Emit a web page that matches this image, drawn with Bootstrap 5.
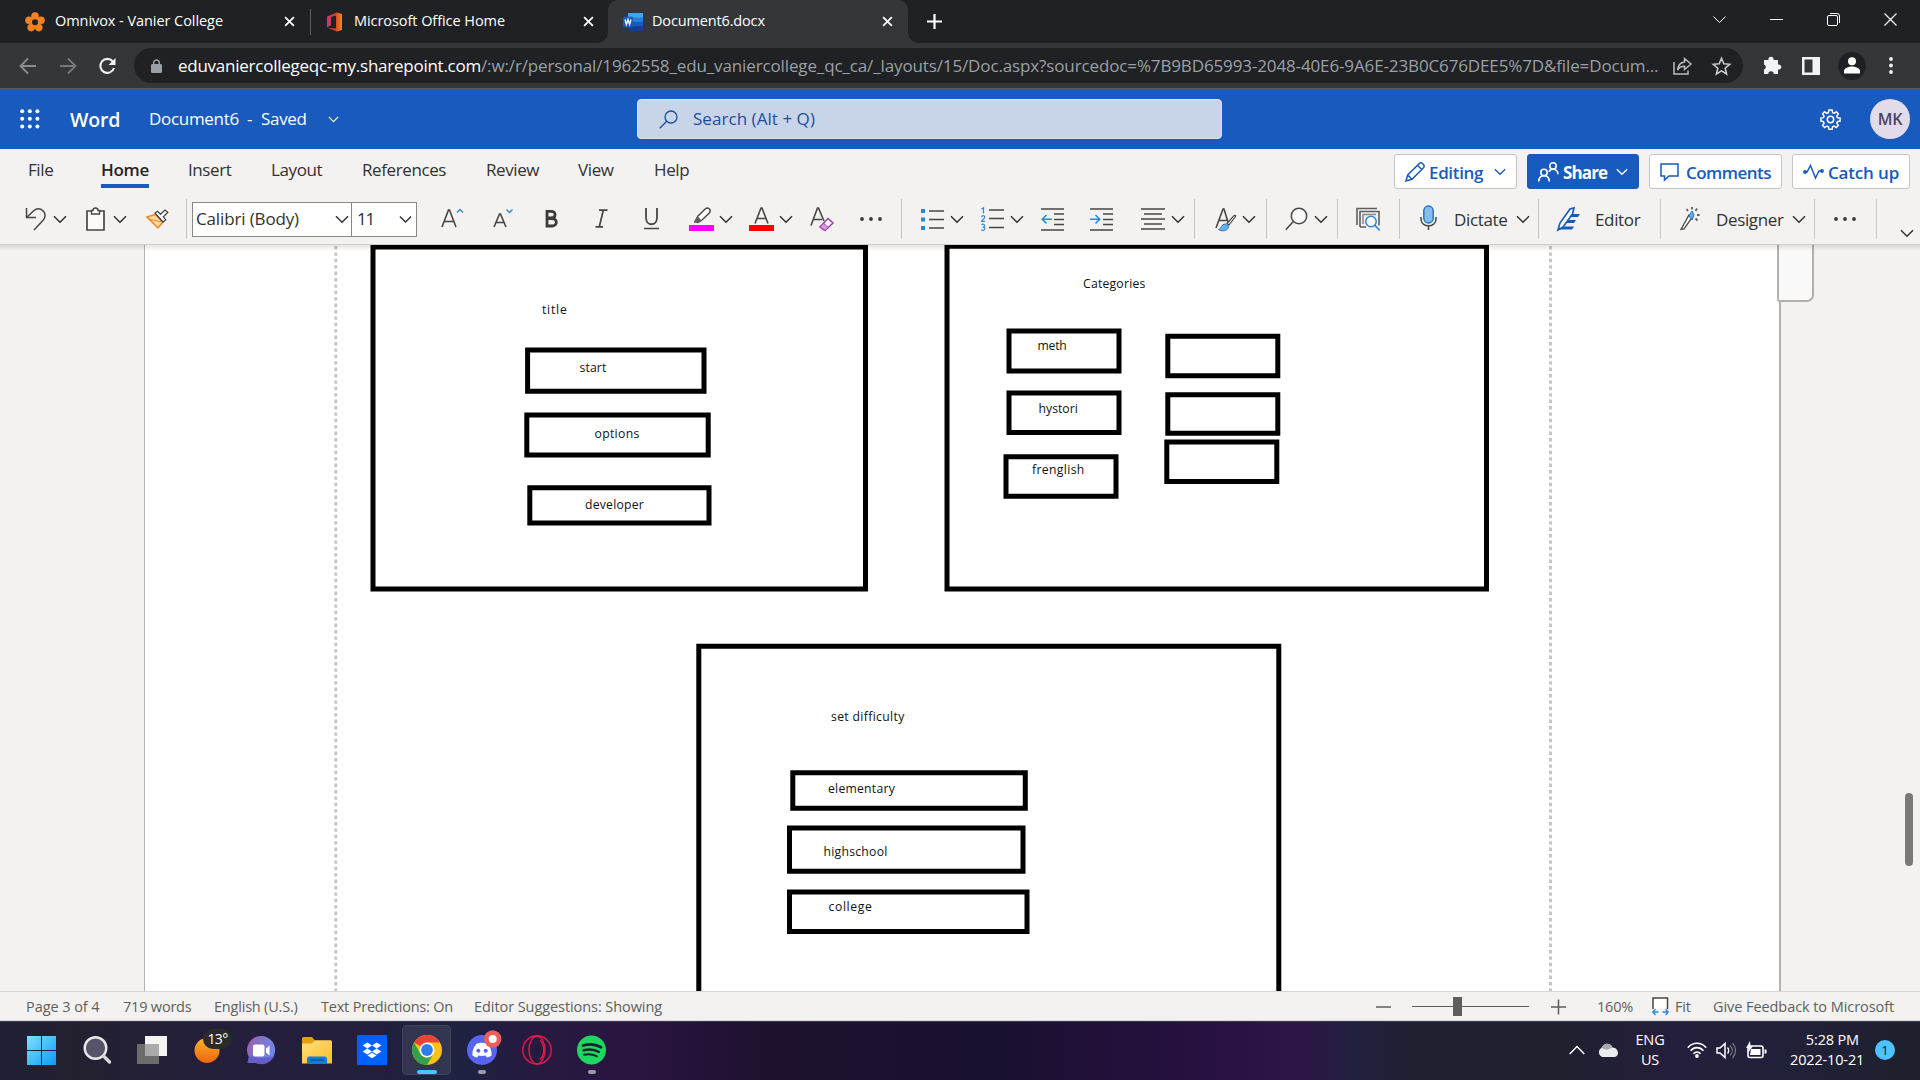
<!DOCTYPE html>
<html lang="en">
<head>
<meta charset="utf-8">
<title>Document6.docx</title>
<link rel="stylesheet" href="https://cdn.jsdelivr.net/npm/bootstrap@5.3.0/dist/css/bootstrap.min.css">
<style>
body{width:1920px;height:1080px;overflow:hidden;font-family:"Open Sans","Noto Sans",sans-serif;font-size:17px;letter-spacing:-.3px;line-height:1.3;color:#323130;background:#f3f2f1}
svg{display:block;flex:none;overflow:visible}
.cells{display:grid;align-items:center;justify-items:start;white-space:nowrap}
.cells>*{min-width:0}
/* browser */
.tabstrip{height:43px;background:#202124;color:#fff;font-size:14.5px;letter-spacing:-.06px;grid-template-columns:30px 229px 26px 16px 28px 229px 25px 319px 786px 57px 57px 57px 20px;padding-left:25px}
.tab-now{height:43px;width:300px;background:#35363a;border-radius:10px 10px 0 0;padding:0 15px 0 15px;position:relative}
.tab-now::before,.tab-now::after{content:"";position:absolute;bottom:0;width:10px;height:10px}
.tab-now::before{left:-10px;background:radial-gradient(circle at 0 0,transparent 9.5px,#35363a 10px)}
.tab-now::after{right:-10px;background:radial-gradient(circle at 100% 0,transparent 9.5px,#35363a 10px)}
.tab-now span{margin-left:9px;letter-spacing:-.15px}
.vr1{width:1px;height:26px;background:#5b5c60}
.addr{height:46px;background:#35363a;border-bottom:1px solid #5c5d60;grid-template-columns:40px 39px 36px 1628px 40px 36px 51px 10px;padding-left:19px}
.omni{height:35px;width:1609px;border-radius:18px;background:#202124;color:#9aa0a6;padding:0 12px 0 17px;letter-spacing:-.128px}
.omni b{font-weight:400;color:#fff;letter-spacing:-.25px}
.omni .url{padding-top:2px}
.star{margin-left:20px}
.prof{width:28px;height:28px;border-radius:50%;background:#202124}
/* word header */
.wordbar{height:60px;background:#185abd;color:#fff;grid-template-columns:50px 79px 98px 14px 67px 309px 1183px 50px 40px;padding-left:20px}
.wordbar .nm{font-size:19.5px;font-weight:600;letter-spacing:-.2px;padding-top:2px}
.find{width:585px;height:40px;background:#c8d4e8;border:1px solid #d9e2f1;border-radius:4px;color:#1e4e9c;padding-left:21px;gap:15px;letter-spacing:.05px}
.ava{width:40px;height:40px;border-radius:50%;background:#e2dcea;color:#4a4560;font-weight:600;font-size:16px}
.menus{height:45px;grid-template-columns:73px 87px 83px 91px 124px 92px 76px 740px 133px 122px 143px 118px;padding-left:28px;letter-spacing:-.4px}
.menus .cur{font-weight:600;letter-spacing:-.3px;position:relative;color:#252423}
.menus .cur::after{content:"";position:absolute;left:0;right:0;bottom:-6px;height:4px;background:#185abd}
.menus>span{margin-top:-2px}
.pill{height:35px;background:#fff;border:1px solid #c8c6c4;border-radius:3px;color:#185abd;font-weight:600;letter-spacing:-.35px;padding:0 10px}
.pill span{padding-top:3px}
.pill.fillb{background:#185abd;border-color:#185abd;color:#fff;font-weight:700;letter-spacing:-.85px}
.p-edit{width:123px}.p-share{width:112px}.p-comm{width:133px;letter-spacing:-.52px}.p-catch{width:118px;letter-spacing:-.17px}
.p-comm span{margin-left:7px}
.ribbon{height:50px;padding-left:25px;grid-template-columns:28px 33px 27px 33px 40px 6px 249px 52px 52px 50px 49px 45px 30px 30px 30px 31px 50px 41px 20px 29px 31px 29px 31px 49px 51px 30px 23px 21px 27px 24px 19px 29px 23px 19px 43px 21px 34px 62px 22px 19px 38px 65px 20px 36px 76px 22px 20px 42px 24px 15px;letter-spacing:-.35px}
.ribbon>span:not(.sep){padding-top:2px}
.sep{width:1px;height:40px;background:#c8c6c4}
.combo{width:225px;height:35px;background:#fff;border:1px solid #8a8886}
.combo .fam{width:159px;border-right:1px solid #8a8886;padding:1px 2px 0 3px;letter-spacing:-.14px}
.combo .siz{padding:1px 4px 0 5px;letter-spacing:-1.2px}
.low{align-self:end;margin-bottom:6px}
/* document area */
.stage{height:747px;background:#f3f2f1;overflow:hidden;position:relative}
.stage::before{content:"";position:absolute;z-index:2;left:0;right:0;top:0;height:7px;border-top:1px solid #cfcdcb;background:linear-gradient(rgba(0,0,0,.1),rgba(0,0,0,0))}
.gutter{width:144px}
.sheet{width:1637px;background:#fff;border:solid #b4b2b0;border-width:0 2px 0 1px}
.flap{position:absolute;left:1777px;top:0;width:37px;height:58px;background:#f9f9f9;border:2px solid #b1b0ae;border-top:0;border-radius:0 0 7px 3px}
.thumb{position:absolute;left:1905px;top:549px;width:8px;height:73px;border-radius:4px;background:#7a7977}
.sheet text{font-size:12.2px;fill:#111}
/* status bar */
.status{height:30px;background:#f3f2f1;border-top:1px solid #d8d6d4;border-bottom:1px solid #d8d6d4;color:#605e5c;font-size:14.5px;letter-spacing:-.2px;padding-left:26px;grid-template-columns:97px 91px 107px 153px 902px 36px 139px 46px 55px 23px 38px 182px}
.status>span{padding-top:3px}
.status .s1{letter-spacing:-.07px}
/* taskbar */
.task{height:59px;color:#fff;font-size:14.5px;letter-spacing:-.15px;line-height:20px;border-top:1px solid #3c3b52;padding-bottom:2px;background:linear-gradient(90deg,#1f2036 0,#232030 80px,#231f3b 200px,#221e3d 380px,#1d2340 450px,#251b40 520px,#2a1440 640px,#1e1130 760px,#1a1030 1000px,#271140 1200px,#2e1547 1300px,#20203e 1360px,#1f2130 1420px,#20202f 1560px,#241f3c 1680px,#21203a 1780px,#1e202c 1920px);padding-left:27px;grid-template-columns:56px 54px 57px 53px 55px 55px 45px 65px 55px 55px 992px 28px 38px 52px 29px 30px 40px 89px 22px}
.hot{width:49px;height:50px;border-radius:5px;background:rgba(255,255,255,.09);border:1px solid rgba(255,255,255,.08)}
.mini{position:relative}
.mini .on{position:absolute;top:35px;left:50%;transform:translateX(-50%);width:8px;height:4px;border-radius:2px;background:#9c9aa8}
.hot .on{width:20px;background:#4cc2ff;top:auto;bottom:0}
.deg{position:absolute;left:9px;top:-8px;width:29px;height:20px;border-radius:10px;background:#2b2b2b;font-size:14px;line-height:19px;text-align:center;letter-spacing:-.6px}
.lang{width:30px}
.clock{width:73px}
.ding{width:20px;height:20px;border-radius:50%;background:#4cc2ff;color:#14202b;font-size:13px}
</style>
<script src="https://cdn.jsdelivr.net/npm/bootstrap@5.3.0/dist/js/bootstrap.bundle.min.js"></script>
</head>
<body class="d-flex flex-column">
<svg width="0" height="0" class="position-absolute">
  <symbol id="cv" viewBox="0 0 14 9"><path d="M1 1.2l6 6 6-6" fill="none" stroke="currentColor" stroke-width="1.5"/></symbol>
  <symbol id="xx" viewBox="0 0 12 12"><path d="M1.2 1.2l9.6 9.6M10.8 1.2l-9.6 9.6" stroke="#fff" stroke-width="1.9"/></symbol>
  <symbol id="dots" viewBox="0 0 22 4"><g fill="#3b3a39"><circle cx="2" cy="2" r="1.9"/><circle cx="11" cy="2" r="1.9"/><circle cx="20" cy="2" r="1.9"/></g></symbol>
  <linearGradient id="gw" x1="0" y1="0" x2="1" y2="1"><stop offset="0" stop-color="#7fe0ff"/><stop offset="1" stop-color="#0a9bf5"/></linearGradient>
  <linearGradient id="gm" x1="0" y1="0" x2="0" y2="1"><stop offset="0" stop-color="#f7b52c"/><stop offset="1" stop-color="#f0620e"/></linearGradient>
  <linearGradient id="gc" x1="0" y1="0" x2="1" y2=".3"><stop offset="0" stop-color="#9a5fa8"/><stop offset="1" stop-color="#6f86e6"/></linearGradient>
  <linearGradient id="gf" x1="0" y1="0" x2="1" y2="1"><stop offset="0" stop-color="#ffe07a"/><stop offset="1" stop-color="#fdbd2b"/></linearGradient>
  <linearGradient id="go" x1="0" y1="0" x2="1" y2="0"><stop offset="0" stop-color="#c23a7a"/><stop offset=".55" stop-color="#e0401c"/><stop offset="1" stop-color="#f08a1a"/></linearGradient>
</svg>

<!-- tab strip -->
<div class="tabstrip cells">
  <svg width="20" height="20" viewBox="0 0 20 20"><g fill="#f58220"><circle cx="10" cy="4" r="3.8"/><circle cx="16" cy="8.3" r="3.8"/><circle cx="13.8" cy="15.6" r="3.8"/><circle cx="6.2" cy="15.6" r="3.8"/><circle cx="4" cy="8.3" r="3.8"/><circle cx="10" cy="10.5" r="5"/></g><circle cx="10" cy="10.3" r="3" fill="#202124"/></svg>
  <span>Omnivox - Vanier College</span>
  <svg width="11" height="11"><use href="#xx"/></svg>
  <span class="vr1"></span>
  <svg width="17" height="20" viewBox="0 0 17 20"><path d="M1 4.500L11 .5 16 2v16l-5 1.500-9-3.500 8 .6V3.600L5 5v8.300l-4 2z" fill="url(#go)"/></svg>
  <span>Microsoft Office Home</span>
  <svg width="11" height="11"><use href="#xx"/></svg>
  <div class="tab-now d-flex align-items-center">
    <svg width="20" height="18" viewBox="0 0 20 18"><path d="M5 0h15v5H5z" fill="#41a5ee"/><path d="M5 4.500h15V9H5z" fill="#2b7cd3"/><path d="M5 9h15v4.500H5z" fill="#185abd"/><path d="M5 13.500h15V18H5z" fill="#103f91"/><rect y="3.800" width="10" height="10.400" rx="1" fill="#185abd"/><path d="M2 6.500l1.400 5 1.600-5 1.600 5 1.400-5" fill="none" stroke="#fff" stroke-width="1.300"/></svg>
    <span class="me-auto">Document6.docx</span>
    <svg width="11" height="11"><use href="#xx"/></svg>
  </div>
  <svg width="15" height="15" viewBox="0 0 15 15"><path d="M7.500 0v15M0 7.500h15" stroke="#fff" stroke-width="2.200"/></svg>
  <svg class="mb-1" width="13" height="8" viewBox="0 0 13 8"><path d="M.5.5l6 6 6-6" fill="none" stroke="#fff"/></svg>
  <svg class="mb-1" width="13" height="13" viewBox="0 0 13 13"><path d="M0 6.500h13" stroke="#fff"/></svg>
  <svg class="mb-1" width="13" height="13" viewBox="0 0 13 13"><rect x=".5" y="2.500" width="10" height="10" rx="1.500" fill="none" stroke="#fff"/><path d="M3 .5h7a2.500 2.500 0 0 1 2.500 2.500v7" fill="none" stroke="#fff"/></svg>
  <svg class="mb-1" width="13" height="13" viewBox="0 0 13 13"><path d="M.5.5l12 12M12.500 .5l-12 12" stroke="#fff" stroke-width="1.100"/></svg>
</div>

<!-- address bar -->
<div class="addr cells">
  <svg width="18" height="18" viewBox="0 0 18 18"><path d="M17 9H2M9 1.500L1.500 9 9 16.500" fill="none" stroke="#8b8d91" stroke-width="1.800"/></svg>
  <svg width="18" height="18" viewBox="0 0 18 18"><path d="M1 9h15M9 1.500L16.500 9 9 16.500" fill="none" stroke="#77797d" stroke-width="1.800"/></svg>
  <svg width="18" height="18" viewBox="0 0 18 18"><path d="M14.800 4.500A7 7 0 1 0 16 11" fill="none" stroke="#f1f1f1" stroke-width="2.100"/><path d="M17.500 1v7h-7z" fill="#f1f1f1"/></svg>
  <div class="omni d-flex align-items-center">
    <svg width="11" height="14" viewBox="0 0 11 14"><rect y="5" width="11" height="9" rx="1.300" fill="#9aa0a6"/><path d="M2.700 5.500V3.700a2.800 2.800 0 0 1 5.600 0v1.800" fill="none" stroke="#9aa0a6" stroke-width="1.500"/></svg>
    <span class="url text-nowrap ps-3 me-auto"><b>eduvaniercollegeqc-my.sharepoint.com</b>/:w:/r/personal/1962558_edu_vaniercollege_qc_ca/_layouts/15/Doc.aspx?sourcedoc=%7B9BD65993-2048-40E6-9A6E-23B0C676DEE5%7D&amp;file=Docum...</span>
    <svg width="19" height="18" viewBox="0 0 19 18"><g fill="none" stroke="#b9bcc0" stroke-width="1.500"><path d="M1 5v12h14v-3.500"/><path d="M11.500 1.500L18 7l-6.500 5.500V9.300C8 9.200 6 10.500 4.500 13 5 8.500 7.500 5.500 11.500 5z"/></g></svg>
    <svg class="star" width="19" height="18" viewBox="0 0 19 18"><path d="M9.500 1.300l2.300 5.500 5.900.5-4.500 3.900 1.400 5.800-5.100-3.100L4.400 17l1.400-5.800L1.300 7.300l5.900-.5z" fill="none" stroke="#c9ccd0" stroke-width="1.600"/></svg>
  </div>
  <svg width="20" height="19" viewBox="0 0 20 19"><path d="M2 4h4.500a2.600 2.600 0 1 1 5 0H16v4.500a2.600 2.600 0 1 1 0 5V18h-4.300a2.700 2.700 0 0 0-5.400 0H2v-4.500a2.600 2.600 0 0 0 0-5z" fill="#f1f3f4"/></svg>
  <svg width="18" height="18" viewBox="0 0 18 18"><path d="M0 0h18v18H0z" fill="#f1f3f4"/><path d="M2.500 2.500h8v13h-8z" fill="#35363a"/></svg>
  <div class="prof d-flex align-items-center justify-content-center"><svg width="16" height="17" viewBox="0 0 16 17"><circle cx="8" cy="4.300" r="4" fill="#fff"/><path d="M0 16.500v-2.500c0-3 5-4.500 8-4.500s8 1.500 8 4.500v2.500z" fill="#fff"/></svg></div>
  <svg width="4" height="16" viewBox="0 0 4 16"><g fill="#f1f3f4"><circle cx="2" cy="1" r="1.900"/><circle cx="2" cy="7.500" r="1.900"/><circle cx="2" cy="14" r="1.900"/></g></svg>
</div>

<!-- Word title bar -->
<div class="wordbar cells">
  <svg width="20" height="20" viewBox="0 0 20 20"><g fill="#fff"><circle cx="2.200" cy="2.200" r="2"/><circle cx="9.800" cy="2.200" r="2"/><circle cx="17.400" cy="2.200" r="2"/><circle cx="2.200" cy="9.800" r="2"/><circle cx="9.800" cy="9.800" r="2"/><circle cx="17.400" cy="9.800" r="2"/><circle cx="2.200" cy="17.400" r="2"/><circle cx="9.800" cy="17.400" r="2"/><circle cx="17.400" cy="17.400" r="2"/></g></svg>
  <span class="nm">Word</span><span>Document6</span><span>-</span><span>Saved</span>
  <svg width="11" height="7"><use href="#cv"/></svg>
  <div class="find d-flex align-items-center"><svg width="19" height="19" viewBox="0 0 19 19"><circle cx="12" cy="7" r="6" fill="none" stroke="#1e4e9c" stroke-width="1.300"/><path d="M7.700 11.300L.7 18.300" stroke="#1e4e9c" stroke-width="1.300"/></svg><span>Search (Alt + Q)</span></div>
  <svg width="21" height="21" viewBox="0 0 21 21"><circle cx="10.500" cy="10.500" r="3.200" fill="none" stroke="#fff" stroke-width="1.500"/><path d="M8.900 1h3.200l.5 2.600 1.500.7L16.300 2.800l2 2-1.500 2.200.7 1.700 2.600.4v3l-2.600.5-.7 1.600 1.500 2.200-2.100 2.100-2.100-1.500-1.500.7-.5 2.500H8.900l-.5-2.500-1.600-.7-2.200 1.500-2-2.100 1.500-2.100-.7-1.700L.9 12.100v-3l2.500-.4.700-1.700-1.500-2.200 2-2 2.200 1.500 1.600-.7z" fill="none" stroke="#fff" stroke-width="1.500"/></svg>
  <div class="ava d-flex align-items-center justify-content-center">MK</div>
</div>

<!-- ribbon tabs -->
<div class="menus cells">
  <span>File</span><span class="cur">Home</span><span>Insert</span><span>Layout</span><span>References</span><span>Review</span><span>View</span><span>Help</span>
  <div class="pill p-edit d-flex align-items-center">
    <svg width="20" height="20" viewBox="0 0 20 20"><path d="M1 19l1.700-6L14.300 1.500a2.200 2.200 0 0 1 3.200 0l1 1a2.200 2.200 0 0 1 0 3.200L7 17.300zM2.700 13L7 17.300M12.500 3.300l4.200 4.200" fill="none" stroke="currentColor" stroke-width="1.500"/></svg><span class="ms-1 me-auto">Editing</span><svg width="12" height="8"><use href="#cv"/></svg></div>
  <div class="pill fillb p-share d-flex align-items-center">
    <svg width="21" height="20" viewBox="0 0 21 20"><g fill="none" stroke="currentColor" stroke-width="1.600"><circle cx="6" cy="10.500" r="3.200"/><path d="M.8 19.500c0-3.500 2-5.700 5.200-5.700s5.200 2.200 5.200 5.700"/><circle cx="15" cy="4" r="3.200"/><path d="M11 10c.5-1.800 2-2.800 4-2.800 3 0 4.800 2 5 5"/></g></svg><span class="ms-1 me-auto">Share</span><svg width="12" height="8"><use href="#cv"/></svg></div>
  <div class="pill p-comm d-flex align-items-center">
    <svg width="19" height="18" viewBox="0 0 19 18"><path d="M1 1h17v12H9l-4.500 4V13H1z" fill="none" stroke="currentColor" stroke-width="1.500"/></svg><span>Comments</span></div>
  <div class="pill p-catch d-flex align-items-center">
    <svg width="21" height="16" viewBox="0 0 21 16"><path d="M2 8h2l3.500-6.500 5 12.500 3.500-7h3" fill="none" stroke="currentColor" stroke-width="1.500"/><circle cx="2" cy="8" r="1.900" fill="currentColor"/><circle cx="19" cy="7" r="1.900" fill="currentColor"/></svg><span class="ms-1">Catch up</span></div>
</div>

<!-- ribbon commands -->
<div class="ribbon cells">
  <svg width="22" height="24" viewBox="0 0 22 24"><path d="M1.500 1v9.500H11M1.800 10.300L9 3.500C14 -.8 22 4 19.500 11c-.6 1.500-1.500 2.500-2.800 3.700L9 23" fill="none" stroke="#484644" stroke-width="1.500"/></svg>
  <svg width="14" height="9"><use href="#cv"/></svg>
  <svg width="19" height="24" viewBox="0 0 19 24"><path d="M1 4h17v19H1z" fill="#fafafa" stroke="#484644" stroke-width="1.700"/><path d="M5.500 7V3.500H7a2.500 2.500 0 0 1 5 0h1.500V7z" fill="#fff" stroke="#484644" stroke-width="1.400"/></svg>
  <svg width="14" height="9"><use href="#cv"/></svg>
  <svg width="23" height="20" viewBox="0 0 23 20"><path d="M1 8l8-2.500 8 7.500-5 6z" fill="#fcd9a0" stroke="#e8882d" stroke-width="1.500"/><path d="M3 10l13 3" stroke="#e8882d"/><path d="M9 4l2.500-1.700 3 3L19 1l2.800 2.300-4.400 4.600 2.300 3L17 13z" fill="#fff" stroke="#484644" stroke-width="1.300"/></svg>
  <span class="sep"></span>
  <div class="combo d-flex"><div class="fam d-flex align-items-center justify-content-between">Calibri (Body)<svg width="14" height="9"><use href="#cv"/></svg></div><div class="siz flex-fill d-flex align-items-center justify-content-between">11<svg width="13" height="9"><use href="#cv"/></svg></div></div>
  <svg width="22" height="22" viewBox="0 0 22 22"><path d="M1 19L7.500 2h1L15 19M3.300 13.500h9.500" fill="none" stroke="#484644" stroke-width="1.600"/><path d="M16 4.500l3-3 3 3" fill="none" stroke="#2b88d8" stroke-width="1.400"/></svg>
  <svg width="20" height="22" viewBox="0 0 20 22"><path d="M1 19L6.500 6h1L13 19M3 14.500h8" fill="none" stroke="#484644" stroke-width="1.600"/><path d="M13.500 1.500l3 3 3-3" fill="none" stroke="#2b88d8" stroke-width="1.400"/></svg>
  <svg width="13" height="20" viewBox="0 0 13 20"><path d="M2 2.300h4c5.500 0 5.300 6.700 0 6.700H2zM2 9.500h5c6 0 5.500 7.500 0 7.500H2z" fill="none" stroke="#3b3a39" stroke-width="2.800"/></svg>
  <svg width="13" height="20" viewBox="0 0 13 20"><path d="M4 1.200h8.500M.5 17.800H8M8.300 1.200L4.300 17.800" fill="none" stroke="#484644" stroke-width="1.700"/></svg>
  <svg width="15" height="22" viewBox="0 0 15 22"><path d="M2 0v9.500c0 9 11 9 11 0V0" fill="none" stroke="#484644" stroke-width="1.800"/><path d="M0 20.500h15" stroke="#484644" stroke-width="1.500"/></svg>
  <svg width="25" height="24" viewBox="0 0 25 24"><path d="M6 14.500L9 9l7.500-7.300c2-2 6.300 1 4 4L13 13l-4 2.500z" fill="#fff" stroke="#484644" stroke-width="1.400"/><path d="M5 16l3.500-7 4.500 5z" fill="#605e5c"/><path d="M0 18h25v6H0z" fill="#f0f"/></svg>
  <svg width="14" height="9"><use href="#cv"/></svg>
  <svg width="25" height="24" viewBox="0 0 25 24"><path d="M6 16.500L12 1h1l6 15.500M8.300 11.500h8.500" fill="none" stroke="#484644" stroke-width="1.600"/><path d="M0 18h25v6H0z" fill="#f00"/></svg>
  <svg width="14" height="9"><use href="#cv"/></svg>
  <svg width="24" height="24" viewBox="0 0 24 24"><path d="M1 18.500L7.500 1h1L14 14M3 12.500h9" fill="none" stroke="#484644" stroke-width="1.600"/><path d="M10 20l8-8.500 5 4.500-8 7.500z" fill="#fff" stroke="#a33bb0" stroke-width="1.500"/><path d="M10 20l3.500-3.800 5 4.500L15 23.500z" fill="#d59adb" stroke="#a33bb0"/></svg>
  <svg width="22" height="4"><use href="#dots"/></svg>
  <span class="sep"></span>
  <svg width="23" height="23" viewBox="0 0 23 23"><path d="M0 1h4v4H0zM0 9.500h4v4H0zM0 18h4v4H0z" fill="#1e8bd3"/><path d="M8 3h15M8 11.500h15M8 20h15" stroke="#484644" stroke-width="1.500"/></svg>
  <svg width="14" height="9"><use href="#cv"/></svg>
  <svg width="23" height="24" viewBox="0 0 23 24"><g fill="none" stroke="#2b88d8" stroke-width="1.200"><path d="M.5 2L2.500.8V6.500M.5 10c.5-2 3.500-1.500 3.200.3C3.500 11.500 1.200 13 .7 14.300H4M.6 18c1-1.500 3-.8 3 .6 0 1-.8 1.500-1.800 1.500 1.300 0 2.200.6 2.100 1.700-.2 1.700-2.600 2-3.500.8"/></g><path d="M8 3h15M8 11.500h15M8 20.500h15" stroke="#484644" stroke-width="1.500"/></svg>
  <svg width="14" height="9"><use href="#cv"/></svg>
  <svg width="23" height="23" viewBox="0 0 23 23"><path d="M0 1h23M13 6h10M13 11.500h10M13 16.500h10M0 22h23" stroke="#484644" stroke-width="1.500"/><path d="M11 11.200H1.500M5.500 7l-4.300 4.200 4.300 4.200" fill="none" stroke="#2b88d8" stroke-width="1.500"/></svg>
  <svg width="23" height="23" viewBox="0 0 23 23"><path d="M0 1h23M13 6h10M13 11.500h10M13 16.500h10M0 22h23" stroke="#484644" stroke-width="1.500"/><path d="M0 11.200h9.500M5.500 7l4.300 4.200-4.300 4.200" fill="none" stroke="#2b88d8" stroke-width="1.500"/></svg>
  <svg width="24" height="22" viewBox="0 0 24 22"><path d="M0 1h24M3 6h18M0 11h24M3 16h18M0 21h24" stroke="#484644" stroke-width="1.500"/></svg>
  <svg width="14" height="9"><use href="#cv"/></svg>
  <span class="sep"></span>
  <svg width="22" height="24" viewBox="0 0 22 24"><path d="M1 21L8 2h1l4 13M4 13.500h8" fill="none" stroke="#484644" stroke-width="1.600"/><path d="M20.500 9.500L14 18l-2-1.500L19 8.700c1-.8 2.300 0 1.500.8z" fill="#fff" stroke="#484644" stroke-width="1.200"/><path d="M3.500 22.500c3-.5 2.500-5.500 7-5.500 3 0 3.800 3 2 5-2.200 2.300-6 2.300-9 .5z" fill="#69afe5" stroke="#1e70bf"/></svg>
  <svg width="14" height="9"><use href="#cv"/></svg>
  <span class="sep"></span>
  <svg width="23" height="24" viewBox="0 0 23 24"><circle cx="14" cy="9" r="7.700" fill="#fafafa" stroke="#484644" stroke-width="1.500"/><path d="M8.300 14.500L.8 22.800" stroke="#484644" stroke-width="1.500"/></svg>
  <svg width="14" height="9"><use href="#cv"/></svg>
  <span class="sep"></span>
  <svg width="25" height="24" viewBox="0 0 25 24"><path d="M1 18V1.500h20M4 20V4.500h19v14M4 20h6" fill="none" stroke="#605e5c" stroke-width="1.600"/><path d="M7 17V7.500h13" fill="none" stroke="#8a8886" stroke-width="1.500"/><circle cx="15" cy="14.500" r="5.200" fill="#fff" stroke="#2b88d8" stroke-width="1.500"/><path d="M18.700 18.200l5 5.300" stroke="#2b88d8" stroke-width="1.700"/></svg>
  <span class="sep"></span>
  <svg class="mb-1" width="17" height="25" viewBox="0 0 17 25"><rect x="3.800" y="1" width="9.400" height="17" rx="4.700" fill="#83beec" stroke="#1e70bf" stroke-width="1.400"/><path d="M1 12v2c0 9 15 9 15 0v-2M8.500 21v4" fill="none" stroke="#484644" stroke-width="1.500"/></svg>
  <span>Dictate</span>
  <svg width="14" height="9"><use href="#cv"/></svg>
  <span class="sep"></span>
  <svg width="24" height="24" viewBox="0 0 24 24"><path d="M1 23l2-7L13 2l4-1-1.500 6L6 20z" fill="#fff" stroke="#185abd" stroke-width="1.700"/><path d="M14.500 7H23l-2 3h-8.500zM11.500 13H19l-2 3H9.500zM7.500 19.500H17l-2 3H1z" fill="#185abd"/></svg>
  <span>Editor</span>
  <span class="sep"></span>
  <svg width="20" height="24" viewBox="0 0 20 24"><path d="M1 22.500L9 8l3.500 2L4 22z" fill="#fff" stroke="#484644" stroke-width="1.300"/><path d="M9 9l3-5 2 4-2 5z" fill="#69afe5" stroke="#1e70bf"/><path d="M6.500 2L8 4M12 0v2.500M17 1.500L15.500 4M17 8h2.500M15.500 11.500l2 2" stroke="#605e5c" stroke-width="1.800"/></svg>
  <span>Designer</span>
  <svg width="14" height="9"><use href="#cv"/></svg>
  <span class="sep"></span>
  <svg width="22" height="4"><use href="#dots"/></svg>
  <span class="sep"></span>
  <svg class="low" width="14" height="9"><use href="#cv"/></svg>
</div>

<!-- document -->
<main class="stage d-flex">
  <div class="gutter"></div>
  <div class="sheet">
    <svg width="1634" height="747" viewBox="145 244 1634 747">
      <path d="M335.800 246V991M1550.500 246V991" stroke="#c6c6c6" stroke-width="3" stroke-dasharray="3.400 3"/>
      <g fill="none" stroke="#000" stroke-width="5">
        <path d="M373 247h492.500v342H373zM947 246.200h539.500V589H947zM698.800 646.200h580v400h-580z"/>
        <path d="M527.600 350H704v41.200H527.600zM526.800 415h181.400v40H526.800zM529.800 487.700H709v35.300H529.800z"/>
        <path d="M1009 331h110v40h-110zM1009 393h110v39.500h-110zM1006 456.700h110v39.500h-110z"/>
        <path d="M1167.800 336.300h110v39.500h-110zM1167.800 394.700h110v38.500h-110zM1166.800 442h110v39.500h-110z"/>
        <path d="M792.800 772.700h232.500v35.500H792.800zM789.500 828h233.500v43.200H789.500zM789.500 892h237.500v39.500H789.500z"/>
      </g>
      <text x="542" y="313.800" textLength="24.500">title</text>
      <text x="579.500" y="372.200" textLength="26.500">start</text>
      <text x="594.500" y="438" textLength="44.500">options</text>
      <text x="585" y="509.300" textLength="58.500">developer</text>
      <text x="1083" y="288.300" textLength="62">Categories</text>
      <text x="1037.500" y="350" textLength="29">meth</text>
      <text x="1038.500" y="413" textLength="39">hystori</text>
      <text x="1032" y="474.300" textLength="52">frenglish</text>
      <text x="831" y="721.200" textLength="73">set difficulty</text>
      <text x="828" y="792.700" textLength="66.500">elementary</text>
      <text x="823.500" y="856.300" textLength="63.500">highschool</text>
      <text x="828.500" y="910.800" textLength="43">college</text>
    </svg>
  </div>
  <div class="flap"></div>
  <div class="thumb"></div>
</main>

<!-- status bar -->
<div class="status cells">
  <span class="s1">Page 3 of 4</span><span>719 words</span><span>English (U.S.)</span><span>Text Predictions: On</span><span class="s1">Editor Suggestions: Showing</span>
  <svg width="15" height="15" viewBox="0 0 15 15"><path d="M0 8h15" stroke="#605e5c" stroke-width="1.500"/></svg>
  <svg width="117" height="20" viewBox="0 0 117 20"><path d="M0 10.500h117" stroke="#605e5c"/><path d="M41 1h9v19h-9z" fill="#605e5c"/></svg>
  <svg width="15" height="15" viewBox="0 0 15 15"><path d="M0 8h15M7.500 .5v15" stroke="#605e5c" stroke-width="1.500"/></svg>
  <span>160%</span>
  <svg width="17" height="18" viewBox="0 0 17 18"><path d="M1 12V1h14.500v11" fill="#fff" stroke="#484644" stroke-width="1.500"/><path d="M.5 15h6M10.500 15h6M3.500 12L.7 15l2.800 3M13.500 12l2.800 3-2.800 3" fill="none" stroke="#2b88d8" stroke-width="1.300"/></svg>
  <span>Fit</span><span class="s1">Give Feedback to Microsoft</span>
</div>

<!-- taskbar -->
<div class="task cells">
  <svg width="29" height="29" viewBox="0 0 29 29"><path d="M0 0h14v14H0zM15 0h14v14H15zM0 15h14v14H0zM15 15h14v14H15z" fill="url(#gw)"/></svg>
  <svg width="28" height="28" viewBox="0 0 28 28"><circle cx="12.500" cy="12" r="10.800" fill="#55546a" stroke="#e9e9ec" stroke-width="2.400"/><path d="M20.500 20l6 6" stroke="#d8d8dc" stroke-width="3.400" stroke-linecap="round"/></svg>
  <svg width="30" height="28" viewBox="0 0 30 28"><path d="M8 0h22v20H8z" fill="#f4f4f4"/><path d="M0 8h22v20H0z" fill="#6c6c6c"/><path d="M8 8h14v12H8z" fill="#aaa"/></svg>
  <div class="mini"><svg width="26" height="27" viewBox="0 0 26 27"><circle cx="13" cy="13.500" r="12.500" fill="url(#gm)"/></svg><span class="deg">13°</span></div>
  <svg width="29" height="29" viewBox="0 0 29 29"><path d="M15 0a14 14 0 1 1-6 27H.5L2 21A14 14 0 0 1 15 0z" fill="url(#gc)"/><path d="M2 19.500c5 3 20 3 25.500 0A14 14 0 0 1 9 27H.5z" fill="#5f56c9" opacity=".8"/><rect x="6" y="8.500" width="11.500" height="12" rx="2" fill="#fff"/><path d="M19 12.500l3.500-3v10l-3.500-3z" fill="#fff"/></svg>
  <svg width="30" height="27" viewBox="0 0 30 27"><path d="M0 1.500A1.500 1.500 0 0 1 1.500 0H10l3 3.500V8H0z" fill="#e0a010"/><path d="M0 6.500h10l3-3.300h15.500A1.500 1.500 0 0 1 30 4.700V26.500H0z" fill="url(#gf)"/><path d="M5 27v-5a2.500 2.500 0 0 1 2.500-2.500h15A2.500 2.500 0 0 1 25 22v5z" fill="#0f7fd6"/><path d="M8.500 23h13" stroke="#0a4f96" stroke-width="1.400"/></svg>
  <svg width="30" height="30" viewBox="0 0 30 30"><path d="M0 0h30v30H0z" fill="#0061fe"/><path d="M10.300 7.500l4.700 3-4.700 3-4.700-3zM19.700 7.500l4.700 3-4.700 3-4.700-3zM10.300 13.500l4.700 3-4.700 3-4.700-3zM19.700 13.500l4.700 3-4.700 3-4.700-3zM15 17.700l4.500 2.800L15 23.300l-4.500-2.800z" fill="#fff"/></svg>
  <div class="mini hot d-flex align-items-center justify-content-center"><svg width="30" height="30" viewBox="0 0 30 30"><circle cx="15" cy="15" r="15" fill="#fbc116"/><path d="M15 15L2 7.500A15 15 0 0 1 28 7.500H15z" fill="#ea4335"/><path d="M2 7.500A15 15 0 0 0 15 30l6.500-11.200a7.500 7.500 0 0 1-13 0z" fill="#34a04c"/><circle cx="15" cy="15" r="7.500" fill="#fff"/><circle cx="15" cy="15" r="5.900" fill="#2f7ded"/></svg><span class="on"></span></div>
  <div class="mini"><svg width="30" height="30" viewBox="0 0 30 30"><circle cx="15" cy="15" r="15" fill="#5865f2"/><path d="M9.500 8.800c3.500-1.400 7.500-1.400 11 0 3 3.500 4.500 7.500 4 11.700-2.300 1.500-3.500 1.700-4.800 1.900l-1-1.900c-2.400.6-5 .6-7.400 0l-1 1.900c-1.300-.2-2.500-.4-4.800-1.900-.5-4.200 1-8.200 4-11.700z" fill="#fff"/><circle cx="11.300" cy="15.800" r="2" fill="#5865f2"/><circle cx="18.700" cy="15.800" r="2" fill="#5865f2"/><circle cx="25.700" cy="4" r="8.700" fill="#ee5c5c"/><circle cx="25.700" cy="4" r="4" fill="#fff"/></svg><span class="on"></span></div>
  <svg width="30" height="30" viewBox="0 0 30 30"><g fill="none" stroke="#e8184a" stroke-width="1.400"><circle cx="15" cy="15" r="14.200"/><ellipse cx="15" cy="15" rx="8" ry="13.800"/><path d="M18 5.500c5 4 5 15 0 19"/></g></svg>
  <div class="mini"><svg width="29" height="30" viewBox="0 0 29 30"><circle cx="14.500" cy="15" r="14.500" fill="#1ed760"/><g fill="none" stroke="#16222a" stroke-linecap="round"><path d="M6 10.500c6-1.700 13-1 18 1.800" stroke-width="2.700"/><path d="M6.500 15.300c5-1.300 11-.8 15.500 1.700" stroke-width="2.300"/><path d="M7 19.700c4.500-1 9-.5 13 1.600" stroke-width="1.900"/></g></svg><span class="on"></span></div>
  <svg width="16" height="10" viewBox="0 0 16 10"><path d="M.7 9L8 1.500 15.300 9" fill="none" stroke="#fff" stroke-width="1.400"/></svg>
  <svg width="21" height="14" viewBox="0 0 21 14"><path d="M5 14a5 5 0 0 1-.5-9C6 .5 13-1.500 15.500 4.500c4 0 5.500 3.500 5.500 5.500 0 2-1.500 4-4 4z" fill="#ececee"/><path d="M4.500 5C6 .5 13-1.500 15.500 4.500L10 7z" fill="#a9a9b0"/></svg>
  <div class="lang text-center">ENG<br>US</div>
  <svg width="20" height="16" viewBox="0 0 20 16"><g fill="none" stroke="#fff" stroke-width="1.600"><path d="M.8 5.800c5-6 13.400-6 18.400 0M3.600 8.800c3.500-4.200 9.300-4.200 12.800 0M6.400 11.800c2-2.400 5.200-2.400 7.200 0"/></g><circle cx="10" cy="14" r="1.900" fill="#fff"/></svg>
  <svg width="20" height="17" viewBox="0 0 20 17"><path d="M1 6h3l5-4.500v14L4 11H1z" fill="none" stroke="#fff" stroke-width="1.500"/><path d="M11.500 5.500c1.500 1.500 1.500 4.500 0 6" fill="none" stroke="#fff" stroke-width="1.400"/><path d="M14 3.500c3 3 3 7 0 10M16.500 1c4 4.500 4 10.500 0 15" fill="none" stroke="#75747f" stroke-width="1.300"/></svg>
  <svg width="21" height="17" viewBox="0 0 21 17"><rect x="2" y="4" width="15" height="11.500" rx="2" fill="none" stroke="#fff" stroke-width="1.600"/><path d="M5 7h9.500v6H4zM18.500 7.500h2v4h-2z" fill="#fff"/><path d="M4-1L0 6h3l-1 5 5-7H4.500z" fill="#fff"/></svg>
  <div class="clock text-end ps-1">5:28 PM<br>2022-10-21</div>
  <div class="ding d-flex align-items-center justify-content-center">1</div>
</div>
</body>
</html>
